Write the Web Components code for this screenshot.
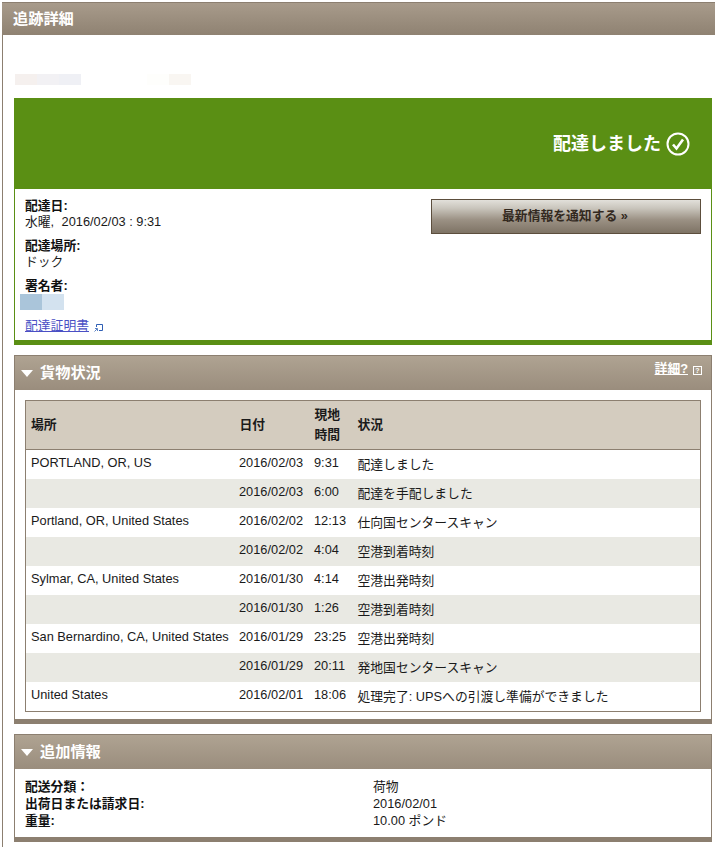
<!DOCTYPE html>
<html lang="ja">
<head>
<meta charset="utf-8">
<title>追跡詳細</title>
<style>
  html, body { margin: 0; padding: 0; background: #fff; }
  body {
    width: 715px; height: 847px; overflow: hidden;
    font: 12.8px/16px "Liberation Sans", "Noto Sans CJK JP", sans-serif;
    color: #1a1a1a;
    --brown: #8c7f70;
    --green: #5a8f14;
  }
</style>
</head>
<body>

<page-panel heading="追跡詳細">
  <redacted-line></redacted-line>
  <delivery-card></delivery-card>
  <section-panel heading="貨物状況" help>
    <track-table></track-table>
  </section-panel>
  <section-panel heading="追加情報">
    <info-list></info-list>
  </section-panel>
</page-panel>

<script>
// ==== outer panel ==== //
class PagePanel extends HTMLElement {
  constructor() {
    super();
    this.attachShadow({ mode: 'open' });
    this.shadowRoot.innerHTML = `
      <style>
        :host { display: block; padding: 2px 0 0 2px; }
        .head {
          height: 33px; box-sizing: border-box; padding-left: 11px;
          display: flex; align-items: center;
          border-top: 1px solid var(--brown);
          background: linear-gradient(#a89b8b, #8f8272);
          color: #fff; font-size: 15.2px; font-weight: 700;
        }
        .body {
          border-left: 1px solid var(--brown);
          padding: 0 0 0 11px;
          width: 698px;
          height: 812px;
        }
      </style>
      <div class="head"><span id="t"></span></div>
      <div class="body"><slot></slot></div>
    `;
    this.shadowRoot.getElementById('t').textContent = this.getAttribute('heading');
  }
}

// ==== blurred-out reference number ==== //
class RedactedLine extends HTMLElement {
  constructor() {
    super();
    this.attachShadow({ mode: 'open' });
    this.shadowRoot.innerHTML = `
      <style>
        :host { display: flex; height: 63px; box-sizing: border-box; padding-top: 39px; padding-left: 1px; }
        i { display: block; height: 11px; width: 22px; }
      </style>
      <i style="background:#f5f0ee"></i><i style="background:#f2f1f4"></i><i style="background:#eff0f5"></i>
      <i style="width:66px"></i>
      <i style="background:#fefefc"></i><i style="background:#f9f6f2"></i>
    `;
  }
}

// ==== green delivered card ==== //
class DeliveryCard extends HTMLElement {
  constructor() {
    super();
    this.attachShadow({ mode: 'open' });
    this.shadowRoot.innerHTML = `
      <style>
        :host { display: block; margin-bottom: 10px; }
        .banner {
          height: 91px; background: var(--green); color: #fff;
          display: flex; align-items: center; justify-content: flex-end; gap: 5px;
          padding-right: 22px; font-size: 18px; font-weight: 700;
        }
        .info {
          height: 156px; box-sizing: border-box;
          border-left: 1px solid var(--green);
          border-right: 1px solid var(--green);
          border-bottom: 5px solid var(--green);
          padding: 9px 10px 0 10px;
          display: flex; justify-content: space-between;
        }
        dl { margin: 0; display: flex; flex-direction: column; gap: 8px; }
        dt { font-weight: 600; color: #111; }
        dd { margin: 0; }
        .comma { display: inline-block; width: 11px; }
        .sig { display: flex; height: 16px; margin-left: -5px; }
        .sig i { width: 22px; background: #aac5da; }
        .sig i + i { background: #d3e2ef; }
        a { color: #4a4fc4; text-decoration: underline; display: inline-flex; }
        a svg { margin: 5px 0 0 5px; }
        button {
          width: 270px; height: 35px; margin-top: 1px;
          font: 600 12.8px/16px "Liberation Sans", "Noto Sans CJK JP", sans-serif; color: #33291f;
          border: 1px solid #5c4e3d;
          background: linear-gradient(#e2e0da 0, #c9c5bc 25%, #9b9184 60%, #7e7365 100%);
          padding: 0 2px 2px 0;
        }
      </style>
      <div class="banner">
        <span>配達しました</span>
        <svg width="24" height="24" viewBox="0 0 24 24" fill="none" stroke="#fff">
          <circle cx="12" cy="12" r="10.5" stroke-width="2"/>
          <path d="M7 12.5l3.5 4L17 7.5" stroke-width="2.6"/>
        </svg>
      </div>
      <div class="info">
        <dl>
          <div><dt>配達日:</dt><dd>水曜<span class="comma">,</span>2016/02/03 : 9:31</dd></div>
          <div><dt>配達場所:</dt><dd>ドック</dd></div>
          <div><dt>署名者:</dt><dd class="sig"><i></i><i></i></dd></div>
          <div><a href="#">配達証明書<svg width="9" height="9" viewBox="0 0 9 9" fill="none" stroke="#2f5fb5"><path d="M2.5 4V1.5h6v6H5"/><path d="M.5 8.5L3 6M1 5.5h2.5V8" stroke-width=".8"/></svg></a></div>
        </dl>
        <button type="button">最新情報を通知する »</button>
      </div>
    `;
  }
}

// ==== collapsible-looking section ==== //
class SectionPanel extends HTMLElement {
  constructor() {
    super();
    this.attachShadow({ mode: 'open' });
    const help = this.hasAttribute('help') ? `
      <span class="help"><a href="#">詳細?</a><b>?</b></span>` : '';
    this.shadowRoot.innerHTML = `
      <style>
        :host { display: block; margin-bottom: 10px; }
        .head {
          height: 35px; box-sizing: border-box; display: flex; align-items: center;
          border: 1px solid var(--brown); border-bottom: 0;
          background: linear-gradient(#afa392, #9a8d7d);
          color: #fff; font-size: 15.2px; font-weight: 700; padding-left: 6px; position: relative;
        }
        .tri { width: 0; height: 0; margin-right: 7px; border: 6.5px solid transparent; border-top: 7px solid #fff; border-bottom: 0; }
        .help { position: absolute; right: 9px; top: 5px; font-size: 12.8px; font-weight: 600; display: flex; align-items: center; gap: 5px; }
        .help a { color: #fff; text-decoration: underline; }
        .help b { width: 7px; height: 7px; border: 1px solid #fff; font: 700 7px/7px "Liberation Sans", sans-serif; text-align: center; margin-top: 2px; }
        .body {
          border-left: 1px solid var(--brown); border-right: 1px solid var(--brown);
          border-bottom: 5px solid var(--brown);
          padding: 10px 10px 7px;
        }
      </style>
      <div class="head"><span class="tri"></span><span id="t"></span>${help}</div>
      <div class="body"><slot></slot></div>
    `;
    this.shadowRoot.getElementById('t').textContent = this.getAttribute('heading');
  }
}

// ==== shipment progress table ==== //
const progressRows = [
  ['PORTLAND, OR, US', '2016/02/03', '9:31', '配達しました'],
  ['', '2016/02/03', '6:00', '配達を手配しました'],
  ['Portland, OR, United States', '2016/02/02', '12:13', '仕向国センタースキャン'],
  ['', '2016/02/02', '4:04', '空港到着時刻'],
  ['Sylmar, CA, United States', '2016/01/30', '4:14', '空港出発時刻'],
  ['', '2016/01/30', '1:26', '空港到着時刻'],
  ['San Bernardino, CA, United States', '2016/01/29', '23:25', '空港出発時刻'],
  ['', '2016/01/29', '20:11', '発地国センタースキャン'],
  ['United States', '2016/02/01', '18:06', '処理完了: UPSへの引渡し準備ができました'],
];

class TrackTable extends HTMLElement {
  constructor() {
    super();
    this.attachShadow({ mode: 'open' });
    const rows = progressRows.map((r, i) => `
      <tr class="${i % 2 ? 'alt' : ''}">
        <td>${r[0]}</td><td class="num">${r[1]}</td><td class="num">${r[2]}</td><td class="st">${r[3]}</td>
      </tr>`).join('');
    this.shadowRoot.innerHTML = `
      <style>
        :host { display: block; }
        table { width: 676px; border-collapse: collapse; table-layout: fixed; border: 1px solid var(--brown); }
        th { background: #d4ccbf; text-align: left; font-weight: 600; height: 48px; padding: 0 0 0 5px; border-bottom: 1px solid var(--brown); line-height: 20px; }
        td { height: 29px; padding: 5px 0 0 5px; vertical-align: top; box-sizing: border-box; white-space: nowrap; }
        td.num { padding-left: 4.5px; }
        td.st { padding-top: 7px; }
        tr.alt td { background: #e9e9e3; }
        tr:last-child td { height: 30px; }
      </style>
      <table>
        <colgroup><col style="width:209px"><col style="width:75px"><col style="width:43px"><col></colgroup>
        <thead><tr><th>場所</th><th>日付</th><th>現地<br>時間</th><th>状況</th></tr></thead>
        <tbody>${rows}</tbody>
      </table>
    `;
  }
}

// ==== additional info list ==== //
class InfoList extends HTMLElement {
  constructor() {
    super();
    this.attachShadow({ mode: 'open' });
    this.shadowRoot.innerHTML = `
      <style>
        :host { display: grid; grid-template-columns: 348px 1fr; line-height: 17px; margin: -1px 0 1px; }
        b { font-weight: 600; color: #111; }
      </style>
      <b>配送分類：</b><span>荷物</span>
      <b>出荷日または請求日:</b><span>2016/02/01</span>
      <b>重量:</b><span>10.00 ポンド</span>
    `;
  }
}

customElements.define('page-panel', PagePanel);
customElements.define('redacted-line', RedactedLine);
customElements.define('delivery-card', DeliveryCard);
customElements.define('section-panel', SectionPanel);
customElements.define('track-table', TrackTable);
customElements.define('info-list', InfoList);
</script>
</body>
</html>
